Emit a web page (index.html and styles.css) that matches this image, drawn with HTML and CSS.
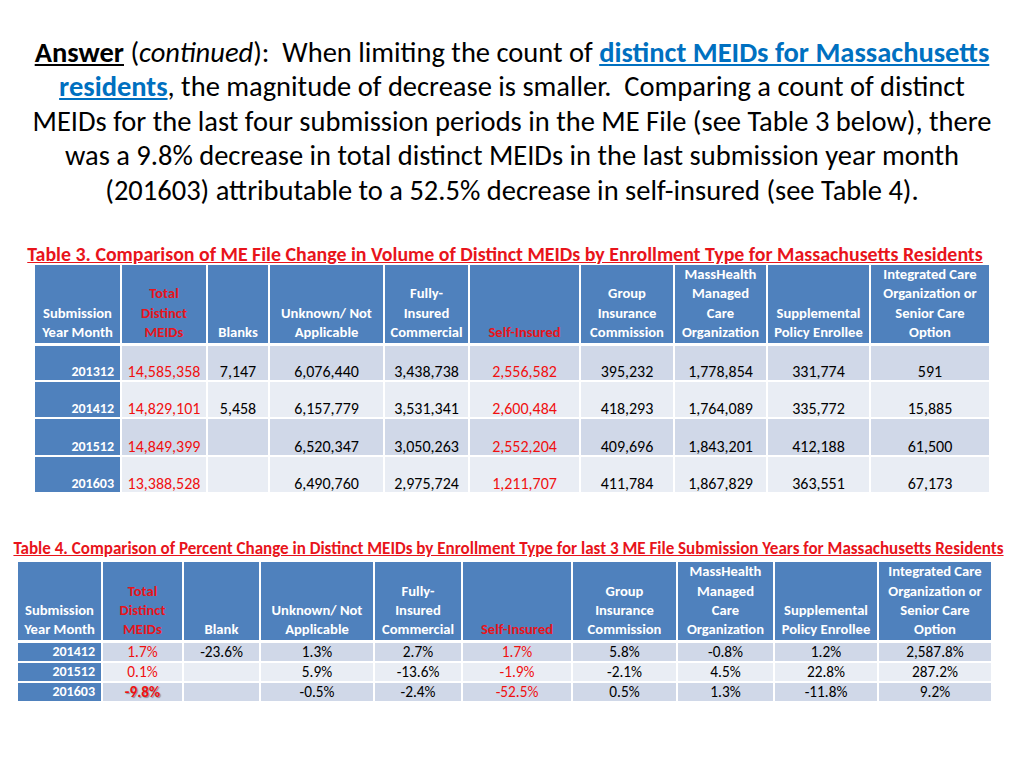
FILE: index.html
```html
<!DOCTYPE html>
<html>
<head>
<meta charset="utf-8">
<link rel="stylesheet" href="styles.css">
</head>
<body>
<div class="slide">
  <p class="intro"><b class="ul">Answer</b> (<i>continued</i>):&nbsp; When limiting the count of <b class="link">distinct MEIDs for Massachusetts residents</b>, the magnitude of decrease is smaller.&nbsp; Comparing a count of distinct MEIDs for the last four submission periods in the ME File (see Table 3 below), there was a 9.8% decrease in total distinct MEIDs in the last submission year month (201603) attributable to a 52.5% decrease in self-insured (see Table 4).</p>

  <h2 class="caption cap3">Table 3. Comparison of ME File Change in Volume of Distinct MEIDs by Enrollment Type for Massachusetts Residents</h2>
  <table class="grid t3">
    <colgroup>
      <col style="width:85px"><col style="width:84px"><col style="width:60px"><col style="width:113px"><col style="width:83px"><col style="width:109px"><col style="width:92px"><col style="width:91px"><col style="width:101px"><col style="width:118px">
    </colgroup>
    <thead>
      <tr>
        <th>Submission<br>Year Month</th>
        <th class="red">Total<br>Distinct<br>MEIDs</th>
        <th>Blanks</th>
        <th>Unknown/ Not<br>Applicable</th>
        <th>Fully-<br>Insured<br>Commercial</th>
        <th class="red">Self-Insured</th>
        <th>Group<br>Insurance<br>Commission</th>
        <th>MassHealth<br>Managed<br>Care<br>Organization</th>
        <th>Supplemental<br>Policy Enrollee</th>
        <th>Integrated Care<br>Organization or<br>Senior Care<br>Option</th>
      </tr>
    </thead>
    <tbody>
      <tr class="dark first">
        <th>201312</th><td class="red">14,585,358</td><td>7,147</td><td>6,076,440</td><td>3,438,738</td><td class="red">2,556,582</td><td>395,232</td><td>1,778,854</td><td>331,774</td><td>591</td>
      </tr>
      <tr class="light">
        <th>201412</th><td class="red">14,829,101</td><td>5,458</td><td>6,157,779</td><td>3,531,341</td><td class="red">2,600,484</td><td>418,293</td><td>1,764,089</td><td>335,772</td><td>15,885</td>
      </tr>
      <tr class="dark">
        <th>201512</th><td class="red">14,849,399</td><td></td><td>6,520,347</td><td>3,050,263</td><td class="red">2,552,204</td><td>409,696</td><td>1,843,201</td><td>412,188</td><td>61,500</td>
      </tr>
      <tr class="light">
        <th>201603</th><td class="red">13,388,528</td><td></td><td>6,490,760</td><td>2,975,724</td><td class="red">1,211,707</td><td>411,784</td><td>1,867,829</td><td>363,551</td><td>67,173</td>
      </tr>
    </tbody>
  </table>

  <h2 class="caption cap4">Table 4. Comparison of Percent Change in Distinct MEIDs by Enrollment Type for last 3 ME File Submission Years for Massachusetts Residents</h2>
  <table class="grid t4">
    <colgroup>
      <col style="width:83px"><col style="width:79px"><col style="width:75px"><col style="width:112px"><col style="width:86px"><col style="width:108px"><col style="width:103px"><col style="width:95px"><col style="width:102px"><col style="width:112px">
    </colgroup>
    <thead>
      <tr>
        <th>Submission<br>Year Month</th>
        <th class="red">Total<br>Distinct<br>MEIDs</th>
        <th>Blank</th>
        <th>Unknown/ Not<br>Applicable</th>
        <th>Fully-<br>Insured<br>Commercial</th>
        <th class="red">Self-Insured</th>
        <th>Group<br>Insurance<br>Commission</th>
        <th>MassHealth<br>Managed<br>Care<br>Organization</th>
        <th>Supplemental<br>Policy Enrollee</th>
        <th>Integrated Care<br>Organization or<br>Senior Care<br>Option</th>
      </tr>
    </thead>
    <tbody>
      <tr class="dark first">
        <th>201412</th><td class="red">1.7%</td><td>-23.6%</td><td>1.3%</td><td>2.7%</td><td class="red">1.7%</td><td>5.8%</td><td>-0.8%</td><td>1.2%</td><td>2,587.8%</td>
      </tr>
      <tr class="light">
        <th>201512</th><td class="red">0.1%</td><td></td><td>5.9%</td><td>-13.6%</td><td class="red">-1.9%</td><td>-2.1%</td><td>4.5%</td><td>22.8%</td><td>287.2%</td>
      </tr>
      <tr class="dark">
        <th>201603</th><td class="red strong">-9.8%</td><td></td><td>-0.5%</td><td>-2.4%</td><td class="red">-52.5%</td><td>0.5%</td><td>1.3%</td><td>-11.8%</td><td>9.2%</td>
      </tr>
    </tbody>
  </table>
</div>
</body>
</html>
```

FILE: styles.css
```css
html, body {
  margin: 0;
  padding: 0;
  background: #ffffff;
}

body {
  font-family: "Carlito", "Lato", "Liberation Sans", sans-serif;
  color: #000;
}

.slide {
  width: 1024px;
  height: 768px;
  overflow: hidden;
  position: relative;
}

.intro {
  margin: 0;
  padding: 36px 26px 0 26px;
  text-align: center;
  font-size: 28.5px;
  line-height: 34.4px;
}

.ul {
  text-decoration: underline;
}

.link {
  color: #0070c0;
  text-decoration: underline;
}

.caption {
  margin: 0;
  color: #e8141b;
  font-weight: bold;
  text-decoration: underline;
  text-align: center;
  white-space: nowrap;
}

.cap3 {
  font-size: 19.9px;
  line-height: 22px;
  margin-top: 35px;
  padding-right: 14px;
}

.cap4 {
  font-size: 17.05px;
  line-height: 20px;
  margin-top: 45px;
  padding-right: 7px;
}

.grid {
  table-layout: fixed;
  border-collapse: separate;
  border-spacing: 2px;
}

.t3 {
  margin: -2px 0 0 33px;
}

.t4 {
  margin: 1px 0 0 16px;
}

.grid thead th {
  background: #4f81bd;
  color: #ffffff;
  font-weight: bold;
  font-size: 14.6px;
  line-height: 19.4px;
  height: 75px;
  padding: 0;
  vertical-align: bottom;
  text-align: center;
  white-space: nowrap;
  overflow: hidden;
}

.grid thead th.red {
  color: #e8141b;
}

.grid tbody th {
  background: #4f81bd;
  color: #ffffff;
  font-weight: bold;
  font-size: 14px;
  text-align: right;
  padding: 0 6px 0 0;
  vertical-align: bottom;
}

.grid tbody td {
  text-align: center;
  padding: 0;
  vertical-align: bottom;
  font-size: 16px;
  white-space: nowrap;
}

.t4 tbody td {
  font-size: 15.3px;
}

.grid tbody tr.first th,
.grid tbody tr.first td {
  border-top: 1px solid #ffffff;
}

.t3 tbody th,
.t3 tbody td {
  height: 35.5px;
  line-height: 17px;
}

.t3 tbody tr.first th,
.t3 tbody tr.first td {
  height: 34px;
}

.t4 tbody th,
.t4 tbody td {
  height: 18px;
  line-height: 18px;
}

.t4 tbody tr.first th,
.t4 tbody tr.first td {
  height: 17px;
}

.grid tbody tr.dark td {
  background: #d0d8e8;
}

.grid tbody tr.light td {
  background: #e9edf4;
}

.grid tbody td.red {
  color: #f01010;
}

.grid tbody td.strong {
  font-weight: bold;
  text-shadow: 1px 1px 1px rgba(0, 0, 0, 0.35);
}
```
